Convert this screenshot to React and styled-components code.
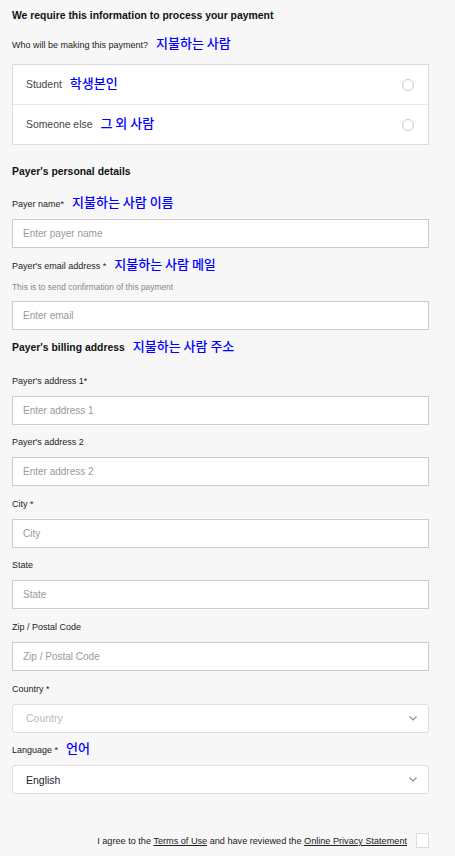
import styled, { createGlobalStyle } from 'styled-components';

const GlobalStyle = createGlobalStyle`
    html, body{
        margin: 0;
        padding: 0;
        background-color: #f7f7f7;
    }
    body{
        font-family: "Liberation Sans", Arial, sans-serif;
        color: #222;
    }
`;

const Page = styled.div`
    width: 417px;
    padding: 9px 26px 0 12px;
    min-height: 856px;
    box-sizing: content-box;
`;

const Title = styled.div`
    font-size: 10.4px;
    font-weight: bold;
    line-height: 14px;
    color: #111;
    margin: ${({ $top }) => $top || 0} 0 ${({ $bottom }) => $bottom || 0};
`;

const Note = styled.span`
    font-family: "Noto Sans CJK KR", sans-serif;
    font-size: 13px;
    font-weight: 500;
    color: #0000ff;
    margin-left: 8px;
    line-height: 0;
`;

const Label = styled.div`
    font-size: 9px;
    line-height: 14px;
    color: #222;
    margin-bottom: 8px;
`;

const Question = styled(Label)`
    margin: 15px 0 12px;
`;

const Hint = styled.div`
    font-size: 8.4px;
    line-height: 12px;
    color: #888;
    margin-bottom: 8px;
`;

const Choices = styled.div`
    background-color: #fff;
    border: 1px solid #dcdcdc;
`;

const Choice = styled.div`
    display: flex;
    align-items: center;
    justify-content: space-between;
    height: 39px;
    padding: 0 13px;
    & + &{
        border-top: 1px solid #e8e8e8;
    }
`;

const ChoiceText = styled.div`
    font-size: 10.4px;
    line-height: 14px;
    color: #444;
`;

const Radio = styled.div`
    width: 10px;
    height: 10px;
    border-radius: 50%;
    border: 1.5px solid #c8c8c8;
    background-color: #fff;
    margin-right: 1px;
`;

const Field = styled.div`
    margin-top: ${({ $first }) => $first ? 0 : "10.6px"};
`;

const Input = styled.input`
    display: block;
    width: 100%;
    height: 29px;
    box-sizing: border-box;
    border: 1px solid #cbcbcb;
    background-color: #fff;
    padding: 0 10px;
    margin: 0;
    font-family: "Liberation Sans", Arial, sans-serif;
    font-size: 10px;
    color: #222;
    outline: none;
    &::placeholder{
        color: #9a9a9a;
    }
`;

const Select = styled.div`
    display: flex;
    align-items: center;
    justify-content: space-between;
    height: 29px;
    box-sizing: border-box;
    border: 1px solid #dedede;
    border-radius: 3px;
    background-color: #fff;
    padding: 0 11px 0 13px;
    font-size: 10.5px;
    color: ${({ $empty }) => $empty ? "#bcbcbc" : "#222"};
`;

const Agree = styled.div`
    display: flex;
    align-items: center;
    justify-content: flex-end;
    margin-top: 39px;
    font-size: 9.15px;
    line-height: 14px;
    color: #222;
`;

const Link = styled.span`
    text-decoration: underline;
    text-underline-offset: 1px;
`;

const Check = styled.div`
    width: 13px;
    height: 15px;
    box-sizing: border-box;
    border: 1px solid #dcdcdc;
    background-color: #fff;
    margin-left: 9px;
`;

function Chevron() {
    return (
        <svg width="8" height="5" viewBox="0 0 8 5">
            <polyline points="0.5,0.5 4,4 7.5,0.5" fill="none" stroke="#8a8a8a" strokeWidth="1.1" />
        </svg>
    );
}

function TextField({ label, note, hint, placeholder, first }) {
    return (
        <Field $first={first}>
            <Label>{label}{note && <Note>{note}</Note>}</Label>
            {hint && <Hint>{hint}</Hint>}
            <Input placeholder={placeholder} />
        </Field>
    );
}

function SelectField({ label, note, value, placeholder }) {
    return (
        <Field>
            <Label>{label}{note && <Note>{note}</Note>}</Label>
            <Select $empty={!value}>
                <span>{value || placeholder}</span>
                <Chevron />
            </Select>
        </Field>
    );
}

const address = [
    { label: "Payer's address 1*", placeholder: "Enter address 1" },
    { label: "Payer's address 2", placeholder: "Enter address 2" },
    { label: "City *", placeholder: "City" },
    { label: "State", placeholder: "State" },
    { label: "Zip / Postal Code", placeholder: "Zip / Postal Code" },
];

export default function App() {
    return (
        <Page>
            <GlobalStyle />
            <Title>We require this information to process your payment</Title>
            <Question>Who will be making this payment?<Note>지불하는 사람</Note></Question>
            <Choices>
                <Choice>
                    <ChoiceText>Student<Note>학생본인</Note></ChoiceText>
                    <Radio />
                </Choice>
                <Choice>
                    <ChoiceText>Someone else<Note>그 외 사람</Note></ChoiceText>
                    <Radio />
                </Choice>
            </Choices>

            <Title $top="20px" $bottom="18px">Payer's personal details</Title>
            <TextField first label="Payer name*" note="지불하는 사람 이름" placeholder="Enter payer name" />
            <TextField label="Payer's email address *" note="지불하는 사람 메일" hint="This is to send confirmation of this payment" placeholder="Enter email" />

            <Title $top="11px" $bottom="19px">Payer's billing address<Note>지불하는 사람 주소</Note></Title>
            {address.map((f, i) => (
                <TextField key={f.label} first={i === 0} label={f.label} placeholder={f.placeholder} />
            ))}
            <SelectField label="Country *" placeholder="Country" />
            <SelectField label="Language *" note="언어" value="English" />

            <Agree>
                <span>I agree to the <Link>Terms of Use</Link> and have reviewed the <Link>Online Privacy Statement</Link></span>
                <Check />
            </Agree>
        </Page>
    );
}
